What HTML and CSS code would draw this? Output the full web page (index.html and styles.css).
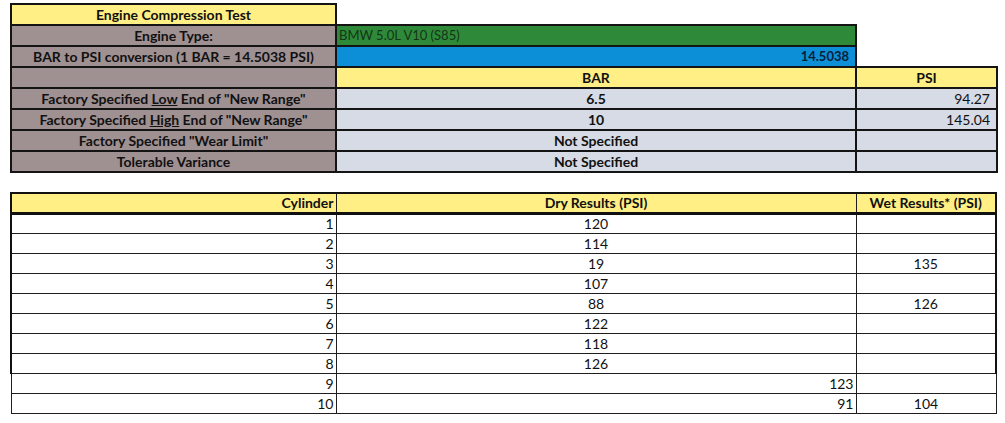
FILE: index.html
```html
<!DOCTYPE html>
<html>
<head>
<meta charset="utf-8">
<link rel="stylesheet" href="styles.css">
</head>
<body>
<div class="sheet">
  <table class="spec">
    <colgroup><col class="c1"><col class="c2"><col class="c3"></colgroup>
    <tr>
      <td class="yellow label">Engine Compression Test</td>
      <td class="blank" colspan="2"></td>
    </tr>
    <tr>
      <td class="gray label">Engine Type:</td>
      <td class="green">BMW 5.0L V10 (S85)</td>
      <td class="blank"></td>
    </tr>
    <tr>
      <td class="gray label">BAR to PSI conversion (1 BAR = 14.5038 PSI)</td>
      <td class="blue">14.5038</td>
      <td class="blank"></td>
    </tr>
    <tr>
      <td class="gray"></td>
      <td class="yellow label">BAR</td>
      <td class="yellow label">PSI</td>
    </tr>
    <tr>
      <td class="gray label">Factory Specified <u>Low</u> End of "New Range"</td>
      <td class="pale label">6.5</td>
      <td class="pale num">94.27</td>
    </tr>
    <tr>
      <td class="gray label">Factory Specified <u>High</u> End of "New Range"</td>
      <td class="pale label">10</td>
      <td class="pale num">145.04</td>
    </tr>
    <tr>
      <td class="gray label">Factory Specified "Wear Limit"</td>
      <td class="pale label">Not Specified</td>
      <td class="pale"></td>
    </tr>
    <tr>
      <td class="gray label">Tolerable Variance</td>
      <td class="pale label">Not Specified</td>
      <td class="pale"></td>
    </tr>
  </table>

  <table class="results">
    <colgroup><col class="c1"><col class="c2"><col class="c3"></colgroup>
    <tr class="head">
      <td class="right bold">Cylinder</td>
      <td class="center bold">Dry Results (PSI)</td>
      <td class="center bold">Wet Results* (PSI)</td>
    </tr>
    <tr class="main"><td class="right">1</td><td class="center">120</td><td></td></tr>
    <tr class="main"><td class="right">2</td><td class="center">114</td><td></td></tr>
    <tr class="main"><td class="right">3</td><td class="center">19</td><td class="center">135</td></tr>
    <tr class="main"><td class="right">4</td><td class="center">107</td><td></td></tr>
    <tr class="main"><td class="right">5</td><td class="center">88</td><td class="center">126</td></tr>
    <tr class="main"><td class="right">6</td><td class="center">122</td><td></td></tr>
    <tr class="main"><td class="right">7</td><td class="center">118</td><td></td></tr>
    <tr class="main last"><td class="right">8</td><td class="center">126</td><td></td></tr>
    <tr class="extra"><td class="right">9</td><td class="right">123</td><td></td></tr>
    <tr class="extra"><td class="right">10</td><td class="right">91</td><td class="center">104</td></tr>
  </table>
</div>
</body>
</html>
```

FILE: styles.css
```css
html, body {
  margin: 0;
  padding: 0;
  background: #ffffff;
}

body {
  font-family: Lato, "Liberation Sans", sans-serif;
  font-size: 14px;
  color: #111111;
}

.sheet {
  padding: 3px 0 0 10px;
}

table {
  border-collapse: collapse;
  table-layout: fixed;
  width: 986px;
}

.c1 { width: 325px; }
.c2 { width: 520px; }
.c3 { width: 141px; }

td {
  padding: 0 2px;
  white-space: nowrap;
  overflow: hidden;
  line-height: 17px;
}

/* top specification table */
.spec tr { height: 21px; }

.spec td {
  border: 2px solid #141414;
}

.spec td.blank {
  border: none;
  background: #ffffff;
}

.label {
  text-align: center;
  font-weight: 700;
}

.yellow { background: #ffef84; }
.gray { background: #9f9091; }
.pale { background: #d6dbe6; }

.green {
  background: #2e8a39;
  color: #143516;
  font-size: 13px;
}

.blue {
  background: #0c8fd6;
  color: #08203c;
  text-align: right;
  padding-right: 6px;
  font-size: 13px;
  font-weight: 700;
}

.num {
  text-align: right;
  padding-right: 6px;
}

/* bottom results table */
.results {
  margin-top: 19px;
  width: 985px;
}

.results .c3 { width: 140px; }

.results tr { height: 20px; }

.results td {
  border: 1px solid #1e1e1e;
}

.results tr.head td {
  background: #ffef84;
  border-top: 2px solid #111111;
  border-bottom: 3px solid #111111;
}

.results tr.main td:first-child,
.results tr.head td:first-child { border-left: 2px solid #111111; }

.results tr.main td:last-child,
.results tr.head td:last-child { border-right: 2px solid #111111; }

.results tr.last td { border-bottom: 1px solid #1e1e1e; }

.right {
  text-align: right;
  padding-right: 2px;
}

.center { text-align: center; }

.bold { font-weight: 700; }
```
